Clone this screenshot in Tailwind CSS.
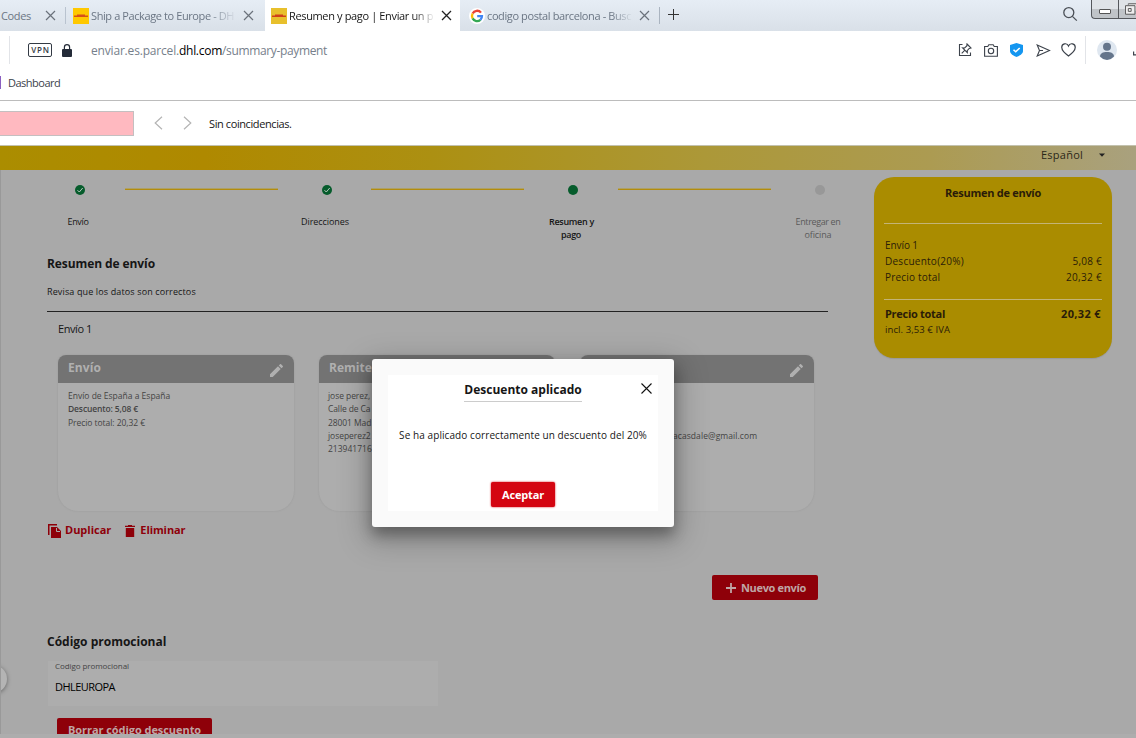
<!DOCTYPE html>
<html lang="es">
<head>
<meta charset="utf-8">
<title>Resumen y pago</title>
<script src="https://cdn.jsdelivr.net/npm/@tailwindcss/browser@4"></script>
</head>
<body class="font-['Open_Sans',sans-serif] bg-white">
<div class="w-[1136px] h-[738px] overflow-hidden relative flex flex-col whitespace-nowrap text-[11px] leading-4 text-[#161616]">

  <!-- Tab strip -->
  <div class="h-[31px] shrink-0 flex bg-linear-to-b from-[#e6edf5] to-[#d9e0e8] text-[#6b7684]">
    <div class="w-[66px] flex items-center pl-px border-r border-[#b9c3cf] my-[7px]">
      <span class="w-[30px] tracking-[-0.34px]">Codes</span>
      <svg class="ml-[14px] size-[11px]" viewBox="0 0 11 11" fill="none" stroke="#6b727b" stroke-width="1.2"><path d="M1 1l9 9M10 1l-9 9"/></svg>
    </div>
    <div class="w-[199px] flex items-center pl-[7px]">
      <svg class="size-4 mr-[2px]" viewBox="0 0 16 16"><path fill="#ffc800" d="M0 0h16v16H0z"/><path stroke="#d8501a" stroke-width="1.6" d="M1 8.200h14M4 7.400h8"/></svg>
      <span class="w-[146px] overflow-hidden mask-r-from-80% tracking-[-0.4px]">Ship a Package to Europe - DH</span>
      <svg class="ml-[6px] size-[11px]" viewBox="0 0 11 11" fill="none" stroke="#6b727b" stroke-width="1.2"><path d="M1 1l9 9M10 1l-9 9"/></svg>
    </div>
    <div class="w-[195px] flex items-center pl-[6px] bg-white text-[#161616]">
      <svg class="size-4 mr-[2px]" viewBox="0 0 16 16"><path fill="#e8c02c" d="M0 0h16v16H0z"/><path stroke="#d0401a" stroke-width="1.6" d="M1 8.200h14M4 7.400h8"/></svg>
      <span class="w-[146px] overflow-hidden mask-r-from-85% tracking-[-0.36px]">Resumen y pago | Enviar un p</span>
      <svg class="ml-[6px] size-[11px]" viewBox="0 0 11 11" fill="none" stroke="#222" stroke-width="1.3"><path d="M1 1l9 9M10 1l-9 9"/></svg>
    </div>
    <div class="w-[200px] my-[7px] flex items-center pl-[9px] border-r border-[#aab4c0]">
      <svg class="size-4 mr-[2px]" viewBox="0 0 16 16"><circle cx="8" cy="8" r="8" fill="#fff"/><g fill="none" stroke-width="2.3"><path stroke="#ea4335" d="M12 4.600A5 5 0 0 0 3.600 5.600"/><path stroke="#fbbc05" d="M3.600 5.600a5 5 0 0 0 0 4.800"/><path stroke="#34a853" d="M3.600 10.400a5 5 0 0 0 7.800 1.400"/><path stroke="#4285f4" d="M8.200 8.100H13a5 5 0 0 1-1.600 3.700"/></g></svg>
      <span class="w-[146px] overflow-hidden mask-r-from-85% tracking-[-0.39px]">codigo postal barcelona - Busc</span>
      <svg class="ml-[6px] size-[11px]" viewBox="0 0 11 11" fill="none" stroke="#6b727b" stroke-width="1.2"><path d="M1 1l9 9M10 1l-9 9"/></svg>
    </div>
    <svg class="mt-[9px] ml-2 size-[11px]" viewBox="0 0 11 11" stroke="#333" stroke-width="1"><path d="M5.500 0v11M0 5.500h11"/></svg>
    <svg class="ml-auto mt-[6px] size-4" viewBox="0 0 16 16" fill="none" stroke="#4a4f56" stroke-width="1.3"><circle cx="6.800" cy="6.600" r="5"/><path d="M10.400 10.400l4.400 4.200"/></svg>
    <div class="ml-[13px] w-[45px] h-[19px] flex rounded-bl-[4px] border-l border-b border-[#55585c] bg-linear-to-b from-[#dfe3e7] from-50% to-[#c0c4c8] to-50%">
      <div class="w-[28px] border-r border-[#55585c] flex items-center justify-center pt-[4px]"><div class="w-3 h-[5px] bg-white border border-[#555] rounded-[1px]"></div></div>
      <svg class="ml-[6px] mt-[2px] w-3 h-[14px]" viewBox="0 0 12 14" fill="#eee" stroke="#555"><path d="M3.500 2.500v-1h9v8h-1"/><path d="M.5 3.500h10v9H.5z"/><path d="M3.500 6.500h3v3h-3z"/></svg>
    </div>
  </div>

  <!-- Address bar -->
  <div class="h-[38px] shrink-0 flex items-center">
    <div class="w-[10px] h-[28px] border-r border-[#e2e4e8]"></div>
    <div class="ml-[18px] w-6 h-[14px] border border-[#333a44] rounded-[2px] flex items-center justify-center text-[8px] font-semibold text-[#333a44] tracking-[0.8px] pl-px">VPN</div>
    <svg class="ml-[10px] w-[10px] h-[13px]" viewBox="0 0 10 13"><rect y="5" width="10" height="8" rx="1" fill="#242b38"/><path d="M2.400 5.500V3.300a2.600 2.600 0 0 1 5.200 0v2.200" fill="none" stroke="#242b38" stroke-width="1.200"/></svg>
    <div class="ml-[19px] mt-px text-[12px] text-[#76808b]"><span class="tracking-[-0.18px]">enviar.es.parcel.</span><span class="text-black tracking-[-0.28px]">dhl.com</span><span class="tracking-[-0.35px]">/summary-payment</span></div>
    <div class="ml-auto flex items-center">
      <svg class="size-[14px]" viewBox="0 0 14 14" fill="none" stroke="#3c424b" stroke-width="1.100"><path d="M4.500 1.500h-3v11h11V9.500"/><path d="M9 1l4 4-1.800.4-2 2.200.1 2L4.600 4.900l2 .1 2.200-2zM6.700 7.300L3.700 10.300"/></svg>
      <svg class="ml-3 w-[14px] h-[13px]" viewBox="0 0 14 13" fill="none" stroke="#3c424b" stroke-width="1.100"><path d="M.6 2.500h3.200L4.800.8h4.400l1 1.700h3.200v9.800H.6z"/><circle cx="7" cy="7" r="2.700"/></svg>
      <svg class="ml-3 w-[13px] h-[14px]" viewBox="0 0 13 15" preserveAspectRatio="none"><path fill="#1496f0" d="M6.500 0L13 2.200v6.300c0 3-3.500 5.200-6.500 6.500C3.500 13.700 0 11.500 0 8.500V2.200z"/><path d="M3.500 7.200l2.200 2.200 4-4" fill="none" stroke="#fff" stroke-width="1.600"/></svg>
      <svg class="ml-[13px] w-[15px] h-[13px]" viewBox="0 0 15 13" fill="none" stroke="#3c424b" stroke-width="1.100"><path d="M1.200 1L13.500 6.500 1.200 12l2.300-5.500zM3.500 6.500h3.500"/></svg>
      <svg class="ml-[10px] w-[15px] h-[14px]" viewBox="0 0 15 14" fill="none" stroke="#3c424b" stroke-width="1.200"><path d="M7.500 13C3 9.800.8 7.500.8 4.600A3.500 3.500 0 0 1 7.500 2.900a3.500 3.500 0 0 1 6.700 1.700C14.200 7.500 12 9.800 7.500 13z"/></svg>
      <div class="ml-[9px] w-px h-[28px] bg-[#e2e4e8]"></div>
      <svg class="ml-[11px] size-5" viewBox="0 0 20 20"><circle cx="10" cy="10" r="10" fill="#dfe7f0"/><circle cx="10" cy="6.800" r="4" fill="#65758b"/><path fill="#65758b" d="M3 16.500c0-3.200 3-4.500 7-4.500s7 1.300 7 4.500A10 10 0 0 1 10 20a10 10 0 0 1-7-3.500z"/></svg>
      <svg class="ml-4 w-[3px] h-3" viewBox="0 0 3 12"><path d="M.6 7.500v3.400H3" fill="none" stroke="#3c424b" stroke-width="1.200"/></svg>
    </div>
  </div>

  <!-- Bookmarks -->
  <div class="h-[32px] shrink-0 flex items-center border-b border-[#bcbcbc] text-[#3c424b] pb-[4px]">
    <div class="w-px h-[13px] bg-[#8a5fc0] mr-[7px]"></div><span class="tracking-[-0.5px]">Dashboard</span>
  </div>

  <!-- Find bar -->
  <div class="h-[45px] shrink-0 flex items-center border-b border-[#c3c2ae]">
    <div class="w-[134px] h-[25px] bg-[#ffb9c0] border border-l-0 border-[#c4bfc0]"></div>
    <svg class="ml-[20px] w-[9px] h-[14px]" viewBox="0 0 9 14" fill="none" stroke="#b4b4b4" stroke-width="1.200"><path d="M8 .7L1.200 7 8 13.300"/></svg>
    <svg class="ml-5 w-[9px] h-[14px]" viewBox="0 0 9 14" fill="none" stroke="#b4b4b4" stroke-width="1.200"><path d="M1 .7L7.800 7 1 13.300"/></svg>
    <span class="ml-[17px] mt-px tracking-[-0.4px]">Sin coincidencias.</span>
  </div>

  <!-- Site header -->
  <div class="h-6 shrink-0 flex items-start bg-[linear-gradient(90deg,#ab8d00_0%,#af8900_18%,#ac9012_38%,#ac9838_62%,#ac9b52_82%,#a9a17e_100%)]">
    <span class="ml-[1041px] mt-px text-[#2a2718] tracking-[0.24px]">Español</span>
    <svg class="ml-4 mt-[7px] w-[6px] h-[4px]" viewBox="0 0 6 4"><path d="M0 .5h6L3 3.800z" fill="#222"/></svg>
  </div>

  <!-- Page -->
  <div class="h-[564px] shrink-0 bg-[#a9a9a9] border-l border-[#999] flex overflow-hidden relative">
    <main class="w-[873px] shrink-0 flex flex-col">
      <div class="h-[85px] shrink-0 flex pl-[31px] text-[9px] leading-[13px]">
        <div class="w-[93px] flex flex-col items-center">
          <svg class="mt-[15px] ml-[3px] size-[10px]" viewBox="0 0 10 10"><circle cx="5" cy="5" r="5" fill="#065c2c"/><path d="M2.500 5.200L4.300 7l3.400-4" fill="none" stroke="#b9c9bf"/></svg>
          <span class="mt-5 -ml-px tracking-[-0.34px]">Envío</span>
        </div>
        <div class="w-[153px] h-px mt-[19px] bg-[#b38c0c] shadow-[0_-1px_0_#ada066]"></div>
        <div class="w-[93px] flex flex-col items-center">
          <svg class="mt-[15px] ml-1 size-[10px]" viewBox="0 0 10 10"><circle cx="5" cy="5" r="5" fill="#065c2c"/><path d="M2.500 5.200L4.300 7l3.400-4" fill="none" stroke="#b9c9bf"/></svg>
          <span class="mt-5 ml-px tracking-[-0.07px]">Direcciones</span>
        </div>
        <div class="w-[153px] h-px mt-[19px] bg-[#b38c0c] shadow-[0_-1px_0_#ada066]"></div>
        <div class="w-[94px] flex flex-col items-center font-semibold">
          <div class="mt-[15px] ml-1 size-[10px] rounded-full bg-[#065c2c]"></div>
          <span class="mt-5 ml-px tracking-[-0.3px]">Resumen y</span><span class="tracking-[-0.33px]">pago</span>
        </div>
        <div class="w-[153px] h-px mt-[19px] bg-[#b38c0c] shadow-[0_-1px_0_#ada066]"></div>
        <div class="w-[94px] flex flex-col items-center text-[#5a5a5a]">
          <div class="mt-[15px] ml-[3px] size-[10px] rounded-full bg-[#989898]"></div>
          <span class="mt-5 tracking-[-0.36px]">Entregar en</span><span class="tracking-[-0.12px]">oficina</span>
        </div>
      </div>
      <div class="ml-[46px] w-[781px] flex flex-col">
        <h1 class="h-[18px] leading-[18px] text-[12px] font-bold tracking-[-0.09px]">Resumen de envío</h1>
        <p class="mt-[11px] h-4 text-[9px] tracking-[0.13px]">Revisa que los datos son correctos</p>
        <div class="mt-[11px] h-px bg-[#222]"></div>
        <p class="mt-[9px] ml-[11px] h-4 tracking-[-0.42px]">Envío 1</p>
        <div class="mt-[18px] ml-[11px] flex gap-[25px] text-[8.5px] leading-[13.300px] text-[#444]">
          <section class="w-[236px] h-[156px] rounded-t-[8px] rounded-b-[20px] bg-[#adadad] shadow-[0_0_2px_#999] overflow-hidden">
            <div class="h-7 bg-[#737373] flex items-center pl-[10px] pr-[11px] text-[12px] font-bold text-[#b0b0b0]"><span class="-mt-[3px] tracking-[0.09px]">Envío</span>
              <svg class="ml-auto mt-[2px] size-[13px]" viewBox="3 3 18 18" fill="#b0b0b0"><path d="M3 17.250V21h3.750L17.810 9.940l-3.750-3.750zM20.710 7.040a1 1 0 0 0 0-1.410l-2.340-2.340a1 1 0 0 0-1.410 0l-1.830 1.830 3.750 3.750z"/></svg></div>
            <div class="pl-[10px] pt-[6px]"><div>Envío de España a España</div><div class="font-semibold tracking-[-0.13px]">Descuento: 5,08 €</div><div class="tracking-[-0.05px]">Precio total: 20,32 €</div></div>
          </section>
          <section class="w-[236px] h-[156px] rounded-t-[8px] rounded-b-[20px] bg-[#adadad] shadow-[0_0_2px_#999] overflow-hidden">
            <div class="h-7 bg-[#737373] flex items-center pl-[10px] text-[12px] font-bold text-[#b0b0b0]"><span class="-mt-[3px]">Remite</span></div>
            <div class="pl-[9px] pt-[6px]"><div class="tracking-[-0.06px]">jose perez,</div><div class="tracking-[-0.11px]">Calle de Ca</div><div class="tracking-[-0.08px]">28001 Mad</div><div class="tracking-[-0.05px]">joseperez2</div><div>213941716</div></div>
          </section>
          <section class="w-[234px] h-[156px] rounded-t-[8px] rounded-b-[20px] bg-[#adadad] shadow-[0_0_2px_#999] overflow-hidden">
            <div class="h-7 bg-[#737373] flex items-center pr-[11px]"><svg class="ml-auto mt-[2px] size-[13px]" viewBox="3 3 18 18" fill="#b0b0b0"><path d="M3 17.250V21h3.750L17.810 9.940l-3.750-3.750zM20.710 7.040a1 1 0 0 0 0-1.410l-2.340-2.340a1 1 0 0 0-1.410 0l-1.830 1.830 3.750 3.750z"/></svg></div>
            <div class="pl-[93px] pt-[46px] tracking-[0.07px]">acasdale@gmail.com</div>
          </section>
        </div>
        <div class="mt-[11px] h-4 flex items-center font-bold text-[#8e0009]">
          <svg class="mt-px ml-[1px] w-[13px] h-[14px]" viewBox="0 0 13 14" fill="#8e0009"><path d="M0 0h9v1.500H1.500V11H0zM3 3h6l4 4v7H3z"/><path d="M8.500 4v3.500H12" stroke="#a9a9a9" fill="none"/></svg>
          <span class="ml-1">Duplicar</span>
          <svg class="mt-px ml-[14px] w-[10px] h-3" viewBox="0 0 10 12" fill="#8e0009"><path d="M0 .7h3V0h4v.7h3V2H0zM.8 3h8.400v9H.8z"/></svg>
          <span class="ml-[5px] tracking-[-0.1px]">Eliminar</span>
        </div>
        <div class="mt-[37px] ml-[665px] w-[106px] h-[25px] rounded-[2px] bg-[#8e0009] flex items-center text-[#bfa5a5] font-bold">
          <svg class="ml-[14px] size-[10px] mt-px" viewBox="0 0 10 10" stroke="#bfa5a5" stroke-width="1.800"><path d="M5 0v10M0 5h10"/></svg>
          <span class="ml-[5px] tracking-[-0.34px]">Nuevo envío</span>
        </div>
        <h2 class="mt-[33px] h-[18px] leading-[18px] text-[12px] font-bold">Código promocional</h2>
        <div class="mt-[10px] ml-[1px] w-[390px] h-[45px] bg-[#adadad] pl-[7px]">
          <div class="text-[8px] leading-[10px] text-[#444] tracking-[-0.07px]">Codigo promocional</div>
          <div class="mt-2 text-black tracking-[-0.54px]">DHLEUROPA</div>
        </div>
        <div class="mt-3 ml-[10px] w-[155px] h-[25px] shrink-0 rounded-[2px] bg-[#8e0009] pl-[11px] pt-1 font-bold text-[#bfa5a5] tracking-[-0.06px]">Borrar código descuento</div>
      </div>
    </main>
    <aside class="mt-[7px] w-[238px] h-[181px] rounded-[20px] bg-[#aa8c00] shadow-[0_1px_1px_#999] px-[10px] text-[#2a1c08]">
      <div class="h-[47px] pt-2 text-center font-bold border-b border-[#c3b477] tracking-[-0.27px]">Resumen de envío</div>
      <div class="mt-[13px] pl-[1px] text-[10px] leading-4">
        <div class="tracking-[-0.08px]">Envío 1</div>
        <div class="flex justify-between tracking-[0.25px]"><span>Descuento(20%)</span><span>5,08 €</span></div>
        <div class="flex justify-between tracking-[0.2px]"><span>Precio total</span><span class="tracking-[0.32px]">20,32 €</span></div>
      </div>
      <div class="mt-[14px] pt-[6px] pl-[1px] pr-px border-t border-[#c3b477]">
        <div class="flex justify-between font-bold"><span class="tracking-[-0.29px]">Precio total</span><span class="tracking-[0.36px]">20,32 €</span></div>
        <div class="text-[9.500px] leading-[15px] tracking-[0.09px]">incl. 3,53 € IVA</div>
      </div>
    </aside>
    <div class="absolute -left-[22px] top-[495px] size-7 rounded-full bg-[#b4b4b4] shadow-[0_1px_4px_#666]"></div>
  </div>
  <div class="h-1 shrink-0 bg-[#adadad]"></div>

  <!-- Dialog -->
  <div class="absolute left-[372px] top-[359px] w-[302px] h-[168px] rounded-[3px] bg-[#fafafa] p-4 shadow-[0_9px_30px_6px_rgba(0,0,0,0.22),0_8px_14px_rgba(0,0,0,0.3)]">
    <div class="w-[270px] h-[136px] bg-white relative flex flex-col items-center">
      <div class="mt-[6px] h-[21px] text-[12px] font-bold border-b border-[#ccc] leading-[17px]">Descuento aplicado</div>
      <svg class="absolute right-[6px] top-[8px] size-[11px]" viewBox="0 0 11 11" fill="none" stroke="#111" stroke-width="1.100"><path d="M.5.5l10 10M10.500.5l-10 10"/></svg>
      <p class="mt-[25px] text-[10px] tracking-[0.08px]">Se ha aplicado correctamente un descuento del 20%</p>
      <div class="mt-[39px] w-16 h-[25px] rounded-[2px] bg-[#d40511] shadow-[0_0_2px_#d40511] flex items-center justify-center font-bold text-white tracking-[-0.16px]">Aceptar</div>
    </div>
  </div>
</div>
</body>
</html>
